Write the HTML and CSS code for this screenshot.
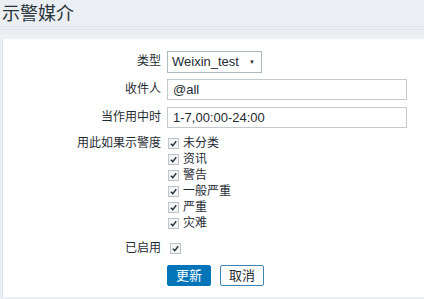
FILE: index.html
```html
<html>
<head>
<title>示警媒介</title>
<meta charset="utf-8" />
<link rel="stylesheet" href="styles.css">
</head>
<body>

<div class="header">
<h1>示警媒介</h1>
</div>
<div class="band"></div>

<div class="panel">
<form class="form">
<label class="lbl">类型</label>
<div class="field">
<div class="select">Weixin_test<span class="arrow">▼</span></div>
</div>

<label class="lbl">收件人</label>
<div class="field"><div class="input">@all</div></div>

<label class="lbl">当作用中时</label>
<div class="field"><div class="input">1-7,00:00-24:00</div></div>

<label class="lbl lbl-top">用此如果示警度</label>
<ul class="checks">
<li><span class="cb"><svg viewBox="0 0 10 10"><path d="M2 5.2 L4.2 7.4 L8 2.6" /></svg></span>未分类</li>
<li><span class="cb"><svg viewBox="0 0 10 10"><path d="M2 5.2 L4.2 7.4 L8 2.6" /></svg></span>资讯</li>
<li><span class="cb"><svg viewBox="0 0 10 10"><path d="M2 5.2 L4.2 7.4 L8 2.6" /></svg></span>警告</li>
<li><span class="cb"><svg viewBox="0 0 10 10"><path d="M2 5.2 L4.2 7.4 L8 2.6" /></svg></span>一般严重</li>
<li><span class="cb"><svg viewBox="0 0 10 10"><path d="M2 5.2 L4.2 7.4 L8 2.6" /></svg></span>严重</li>
<li><span class="cb"><svg viewBox="0 0 10 10"><path d="M2 5.2 L4.2 7.4 L8 2.6" /></svg></span>灾难</li>
</ul>

<label class="lbl enabled-lbl">已启用</label>
<div class="field enabled"><span class="cb"><svg viewBox="0 0 10 10"><path d="M2 5.2 L4.2 7.4 L8 2.6" /></svg></span></div>

<div></div>
<div class="buttons">
<button type="button" class="btn btn-main">更新</button>
<button type="button" class="btn btn-alt">取消</button>
</div>
</form>
</div>

</body>
</html>
```

FILE: styles.css
```css
body {
    margin: 0;
    background-color: #ebeef2;
    color: #1f2c33;
    font-family: Arial, "Liberation Sans", "Noto Sans CJK SC", sans-serif;
    font-size: 12px;
    overflow: hidden;
}

.header {
    height: 26px;
    padding-left: 2px;
}

.header h1 {
    margin: 0;
    font-size: 18px;
    font-weight: normal;
    line-height: 28px;
    color: #2a353b;
}

.band {
    height: 12px;
    border-top: 1px solid #dfe4e7;
    background: linear-gradient(#ebeef2 0, #ebeef2 2px, #e1e6e9 2px, #e1e6e9 3px, #ebeef2 3px, #ebeef2 6px, #e3e8eb 6px, #e3e8eb 7px, #eef1f3 7px);
}

.panel {
    margin-left: 2px;
    height: 258px;
    background-color: #fff;
    border-left: 1px solid #dfe4e7;
    padding-top: 12px;
    box-sizing: border-box;
}

.form {
    display: grid;
    grid-template-columns: 158px auto;
    column-gap: 6px;
    row-gap: 7px;
    margin: 0;
}

.lbl {
    text-align: right;
    line-height: 21px;
    height: 21px;
    color: #1f2c33;
}

.lbl-top {
    line-height: 16px;
    height: 16px;
}

.field {
    display: flex;
    align-items: center;
    height: 21px;
}

.select {
    width: 95px;
    height: 22px;
    box-sizing: border-box;
    border: 1px solid #acbbc0;
    padding: 0 6px 0 4px;
    display: flex;
    align-items: center;
    justify-content: space-between;
    font-size: 13px;
}

.arrow {
    font-size: 6px;
    color: #1f2c33;
}

.input {
    width: 240px;
    height: 21px;
    box-sizing: border-box;
    border: 1px solid #c4c9cc;
    padding: 0 5px;
    line-height: 19px;
    font-size: 13px;
}

.checks {
    list-style: none;
    margin: 0 0 -1px 0;
    padding: 0 0 0 1px;
}

.checks li {
    display: flex;
    align-items: center;
    height: 16px;
    line-height: 16px;
    font-size: 12px;
}

.cb {
    width: 9px;
    height: 9px;
    border: 1px solid #bcc2c6;
    background-color: #f2f4f5;
    margin-right: 4px;
    display: inline-block;
}

.cb svg {
    display: block;
    width: 9px;
    height: 9px;
}

.cb path {
    fill: none;
    stroke: #2b3a42;
    stroke-width: 1.7;
}

.enabled-lbl {
    line-height: 22px;
    height: 22px;
}

.enabled {
    height: 22px;
    padding-left: 3px;
}

.buttons {
    display: flex;
    gap: 9px;
    margin-top: -1px;
}

.btn {
    height: 21px;
    width: 44px;
    font-family: inherit;
    font-size: 13px;
    line-height: 19px;
    border-radius: 2px;
    padding: 0;
}

.btn-main {
    background-color: #0275b8;
    border: 1px solid #0275b8;
    color: #fff;
}

.btn-alt {
    background-color: #fff;
    border: 1px solid #3d84b8;
    color: #1f2c33;
}
```
